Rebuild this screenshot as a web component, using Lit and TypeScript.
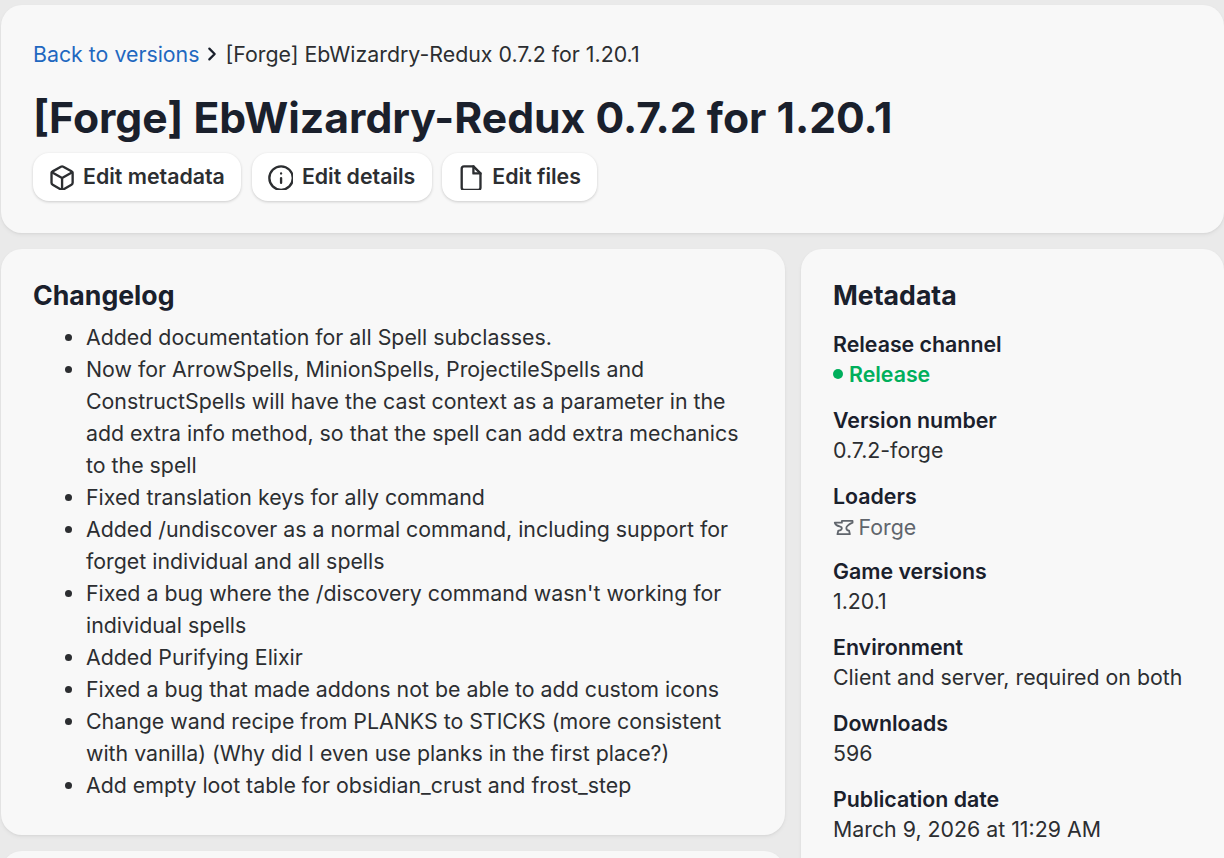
import { LitElement, html, css } from "lit";
import { customElement } from "lit/decorators.js";

const stroke = (inner: unknown) => html`<svg viewBox="0 0 24 24" fill="none" stroke="currentColor" stroke-width="2" stroke-linecap="round" stroke-linejoin="round">${inner}</svg>`;

@customElement("app-root")
export class AppRoot extends LitElement {
  static styles = css`
    :host { display: block; height: 858px; overflow: hidden; background: #eaeaea; font-family: Inter, "Liberation Sans", sans-serif; color: #2c2e31; font-size: 21.33px; line-height: 32px; }
    .page { padding: 5px 0 0 1px; display: flex; flex-direction: column; gap: 16px; width: 1223px; }
    .card { background: #f8f8f8; border-radius: 21px; box-shadow: 0 2px 4px rgba(0,0,0,.05), 0 1px 2px rgba(0,0,0,.04); padding: 32px; box-sizing: border-box; }
    .head { height: 228px; padding: 33px 32px 0; }
    .crumbs { display: flex; align-items: center; height: 32px; gap: 5px; }
    .crumbs a { color: #1f68c0; text-decoration: none; }
    .crumbs svg { width: 16px; height: 16px; color: #1a202c; }
    h1 { margin: 19px 0 0; font-size: 42.67px; line-height: 58px; font-weight: 700; color: #1a202c; }
    .btns { display: flex; gap: 10.67px; margin-top: 6px; }
    .btn { height: 48px; box-sizing: border-box; display: flex; align-items: center; gap: 9px; padding: 0 16.4px 2px 16px; background: #fff; border-radius: 16px; font-weight: 600; box-shadow: 0 1px 3px rgba(0,0,0,.18); }
    .btn svg { width: 26px; height: 26px; margin: 2px 0 0 -1px; }
    .cols { display: grid; grid-template-columns: 784px 1fr; gap: 16px; }
    .left { display: flex; flex-direction: column; gap: 16px; }
    .log { height: 586px; padding: 29px 32px 0; }
    h2 { margin: 0; font-size: 26.67px; line-height: 34px; font-weight: 700; color: #1a202c; }
    ul { margin: 9px 0 0; padding-left: 53px; }
    .stub { height: 200px; }
    .side { height: 800px; padding: 29px 32px 0; }
    .group { margin-top: 15.83px; }
    .side h2 + .group { margin-top: 17px; }
    .k { font-weight: 600; color: #1a202c; line-height: 30px; }
    .v { line-height: 30px; }
    .rel { display: flex; align-items: center; gap: 6px; color: #00af5c; font-weight: 600; }
    .dot { width: 10px; height: 10px; border-radius: 50%; background: #00af5c; }
    .loader { display: flex; align-items: center; gap: 4.2px; height: 30px; box-sizing: border-box; padding-top: 2px; color: #60656c; }
    .loader svg { width: 21.33px; height: 21.33px; }
  `;
  render() {
    return html`<div class="page">
      <section class="card head">
        <div class="crumbs"><a href="#">Back to versions</a>
          <svg viewBox="0 0 24 24" fill="none" stroke="currentColor" stroke-width="3.4" stroke-linecap="round" stroke-linejoin="round"><path d="m8 4 8 8-8 8"/></svg>
          <span>[Forge] EbWizardry-Redux 0.7.2 for 1.20.1</span></div>
        <h1>[Forge] EbWizardry-Redux 0.7.2 for 1.20.1</h1>
        <div class="btns">
          <div class="btn">${stroke(html`<svg viewBox="0 0 24 24"><path d="M21 16V8a2 2 0 0 0-1-1.73l-7-4a2 2 0 0 0-2 0l-7 4A2 2 0 0 0 3 8v8a2 2 0 0 0 1 1.73l7 4a2 2 0 0 0 2 0l7-4A2 2 0 0 0 21 16z"/><path d="M3.3 7 12 12l8.7-5M12 22V12"/></svg>`)}Edit metadata</div>
          <div class="btn">${stroke(html`<svg viewBox="0 0 24 24"><circle cx="12" cy="12" r="10"/><path d="M12 16v-4M12 8h.01"/></svg>`)}Edit details</div>
          <div class="btn">${stroke(html`<svg viewBox="0 0 24 24"><path d="M14 2H6a2 2 0 0 0-2 2v16a2 2 0 0 0 2 2h12a2 2 0 0 0 2-2V8z"/><path d="M14 2v6h6"/></svg>`)}Edit files</div>
        </div>
      </section>
      <div class="cols">
        <div class="left">
          <section class="card log">
            <h2>Changelog</h2>
            <ul>
              <li>Added documentation for all Spell subclasses.</li>
              <li>Now for ArrowSpells, MinionSpells, ProjectileSpells and ConstructSpells will have the cast context as a parameter in the add extra info method, so that the spell can add extra mechanics to the spell</li>
              <li>Fixed translation keys for ally command</li>
              <li>Added /undiscover as a normal command, including support for forget individual and all spells</li>
              <li>Fixed a bug where the /discovery command wasn't working for individual spells</li>
              <li>Added Purifying Elixir</li>
              <li>Fixed a bug that made addons not be able to add custom icons</li>
              <li>Change wand recipe from PLANKS to STICKS (more consistent with vanilla) (Why did I even use planks in the first place?)</li>
              <li>Add empty loot table for obsidian_crust and frost_step</li>
            </ul>
          </section>
          <section class="card stub"></section>
        </div>
        <section class="card side">
          <h2>Metadata</h2>
          <div class="group"><div class="k">Release channel</div><div class="v rel"><span class="dot"></span>Release</div></div>
          <div class="group"><div class="k">Version number</div><div class="v">0.7.2-forge</div></div>
          <div class="group"><div class="k">Loaders</div><div class="v loader"><svg viewBox="0 0 24 24" fill="none" stroke="currentColor" stroke-width="2" stroke-linecap="round" stroke-linejoin="round"><path d="M2 7.5h8v-2h12v2s-7 3.4-7 6 3.1 3.1 3.1 3.1l.9 3.9H5l1-4.1s3.8.1 4-2.9c.2-2.7-6.5-.7-8-6Z"/></svg>Forge</div></div>
          <div class="group"><div class="k">Game versions</div><div class="v">1.20.1</div></div>
          <div class="group"><div class="k">Environment</div><div class="v">Client and server, required on both</div></div>
          <div class="group"><div class="k">Downloads</div><div class="v">596</div></div>
          <div class="group"><div class="k">Publication date</div><div class="v">March 9, 2026 at 11:29 AM</div></div>
        </section>
      </div>
    </div>`;
  }
}
